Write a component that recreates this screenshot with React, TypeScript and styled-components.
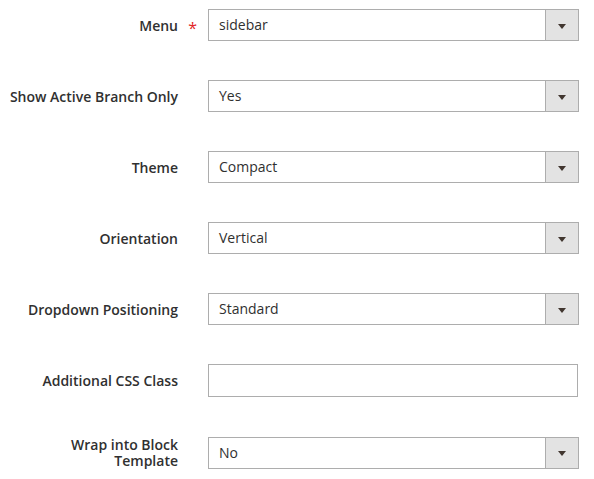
import React from "react";
import styled, { createGlobalStyle } from "styled-components";

const Global = createGlobalStyle`
  html, body { margin: 0; padding: 0; background: #ffffff; }
  body { font-family: "Open Sans", "Noto Sans", sans-serif; color: #303030; }
`;

const Form = styled.div`
  display: flex;
  flex-direction: column;
  gap: 39px;
  padding-top: 9px;
`;

const Row = styled.div`
  display: grid;
  grid-template-columns: 178px 371px;
  column-gap: 30px;
  align-items: center;
`;

const Label = styled.label<{ $required?: boolean }>`
  position: relative;
  text-align: right;
  font-size: 14px;
  font-weight: 600;
  line-height: 16px;
  color: #303030;
  padding-top: 1px;
  ${(p) =>
    p.$required
      ? `&::after {
    content: "*";
    position: absolute;
    right: -19px;
    top: 3px;
    color: #e22626;
    font-size: 16px;
    font-weight: 400;
  }`
      : ""}
`;

const SelectBox = styled.div`
  display: flex;
  height: 32px;
  box-sizing: border-box;
  border: 1px solid #adadad;
  background: #ffffff;
`;

const Value = styled.div`
  flex: 1;
  padding-left: 10px;
  font-size: 14px;
  line-height: 30px;
  color: #303030;
`;

const ArrowButton = styled.div`
  width: 32px;
  border-left: 1px solid #adadad;
  background: #e3e3e3;
  display: flex;
  align-items: center;
  justify-content: center;
  &::after {
    content: "";
    width: 0;
    height: 0;
    margin-top: 2px;
    border-left: 4px solid transparent;
    border-right: 4px solid transparent;
    border-top: 5px solid #41362f;
  }
`;

const TextInput = styled.div`
  width: 370px;
  height: 33px;
  box-sizing: border-box;
  border: 1px solid #adadad;
  background: #ffffff;
`;

const Select = ({ value }: { value: string }) => (
  <SelectBox>
    <Value>{value}</Value>
    <ArrowButton />
  </SelectBox>
);

const fields: { label: React.ReactNode; value?: string; required?: boolean }[] = [
  { label: "Menu", value: "sidebar", required: true },
  { label: "Show Active Branch Only", value: "Yes" },
  { label: "Theme", value: "Compact" },
  { label: "Orientation", value: "Vertical" },
  { label: "Dropdown Positioning", value: "Standard" },
  { label: "Additional CSS Class" },
  {
    label: (
      <>
        Wrap into Block
        <br />
        Template
      </>
    ),
    value: "No",
  },
];

export default function App() {
  return (
    <>
      <Global />
      <Form>
        {fields.map((f, i) => (
          <Row key={i}>
            <Label $required={f.required}>{f.label}</Label>
            {f.value !== undefined ? <Select value={f.value} /> : <TextInput />}
          </Row>
        ))}
      </Form>
    </>
  );
}
